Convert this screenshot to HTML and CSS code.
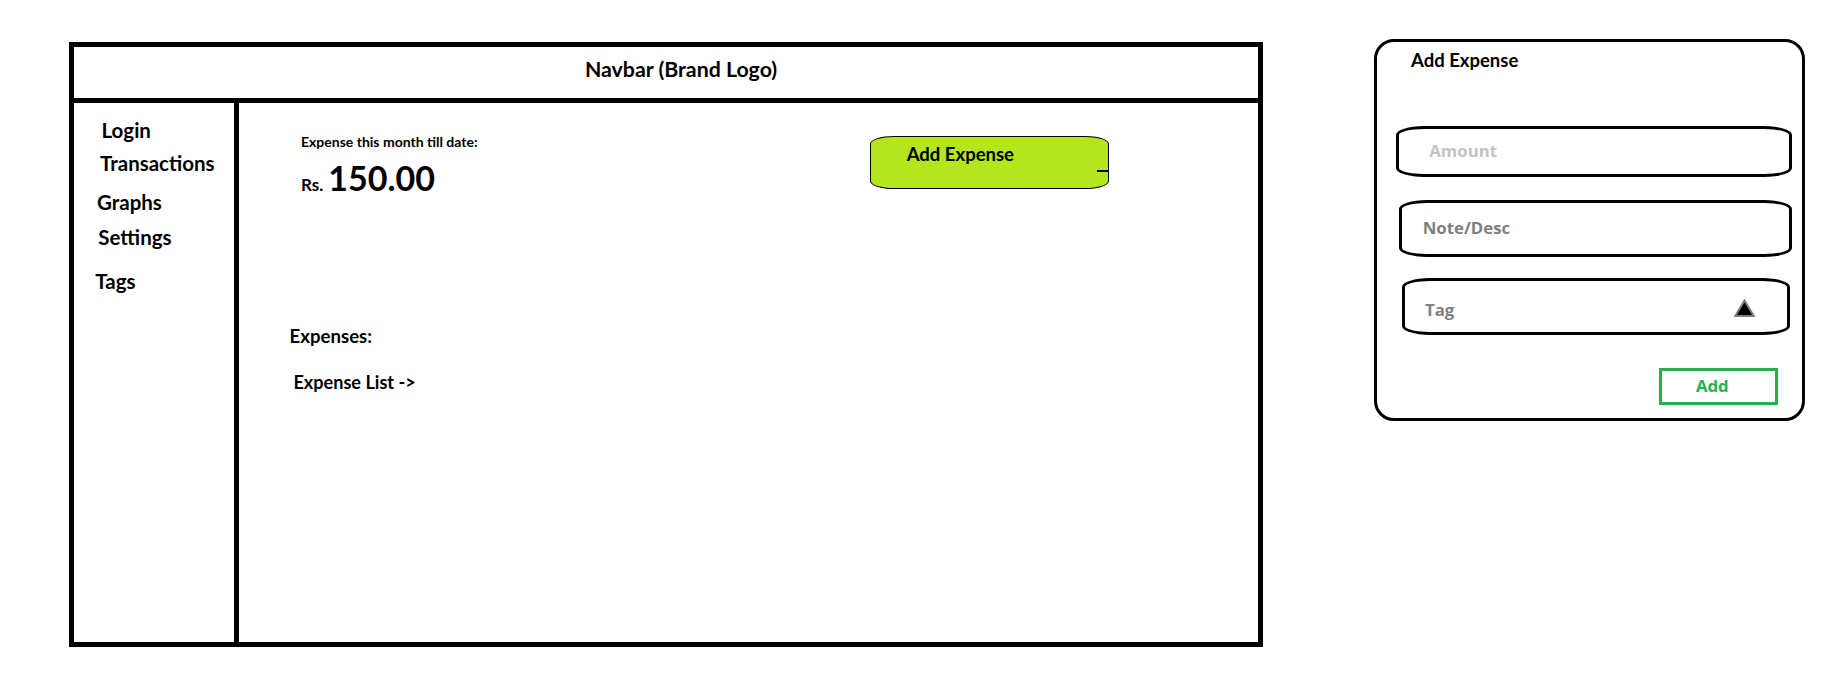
FILE: index.html
```html
<!DOCTYPE html>
<html lang="en">
<head>
<meta charset="utf-8">
<title>Expense Tracker Wireframe</title>
<link rel="stylesheet" href="styles.css">
</head>
<body>
<div class="page">
  <div class="frame">
    <header class="navbar"><span class="navbar-title">Navbar (Brand Logo)</span></header>
    <div class="layout">
      <nav class="sidebar">
        <a class="side-link side-login">Login</a>
        <a class="side-link side-transactions">Transactions</a>
        <a class="side-link side-graphs">Graphs</a>
        <a class="side-link side-settings">Settings</a>
        <a class="side-link side-tags">Tags</a>
      </nav>
      <main class="content">
        <div class="top-row">
          <div class="summary">
            <div class="summary-label">Expense this month till date:</div>
            <div class="summary-amount"><span class="currency">Rs.</span><span class="amount">150.00</span></div>
          </div>
          <div class="add-expense-btn">Add Expense</div>
        </div>
        <h2 class="expenses-heading">Expenses:</h2>
        <div class="expense-list">Expense List -&gt;</div>
      </main>
    </div>
  </div>
  <section class="card">
    <h2 class="card-title">Add Expense</h2>
    <div class="field field-amount"><span class="placeholder placeholder-light">Amount</span></div>
    <div class="field field-note"><span class="placeholder">Note/Desc</span></div>
    <div class="field field-tag">
      <span class="placeholder">Tag</span>
      <svg class="tag-caret" width="21" height="18" viewBox="0 0 21 18"><polygon points="10.5,1.5 1.2,17 19.8,17" fill="#000" stroke="#7f7f7f" stroke-width="2"/></svg>
    </div>
    <div class="card-actions"><div class="add-btn">Add</div></div>
  </section>
</div>
</body>
</html>
```

FILE: styles.css
```css
body {
  margin: 0;
  background: #fff;
  color: #000;
  font-family: Lato, "Liberation Sans", sans-serif;
}

.page {
  display: flex;
  align-items: flex-start;
  padding: 39px 0 0 69px;
}

.frame {
  box-sizing: border-box;
  width: 1194px;
  height: 605px;
  margin-top: 3px;
  border: 5px solid #000;
  display: flex;
  flex-direction: column;
}

.navbar {
  box-sizing: border-box;
  height: 56px;
  border-bottom: 5px solid #000;
  display: flex;
  justify-content: center;
  align-items: flex-start;
  padding: 11.6px 0 0 30px;
  font-size: 21.3px;
  line-height: 21px;
  font-weight: 700;
}

.layout {
  flex: 1;
  display: flex;
}

.sidebar {
  box-sizing: border-box;
  width: 165px;
  border-right: 5px solid #000;
  padding-top: 17.1px;
}

.side-link {
  display: block;
  font-size: 20.5px;
  line-height: 20px;
  font-weight: 700;
  color: #000;
}

.side-login { padding-left: 27.5px; }
.side-transactions { padding-left: 26px; margin-top: 12.7px; }
.side-graphs { padding-left: 23px; margin-top: 19px; }
.side-settings { padding-left: 24.3px; margin-top: 15px; }
.side-tags { padding-left: 21.2px; margin-top: 24px; }

.content {
  flex: 1;
}

.top-row {
  display: flex;
  align-items: flex-start;
  padding-left: 62px;
}

.summary {
  width: 569px;
  padding-top: 31.7px;
  font-weight: 700;
}

.summary-label {
  font-size: 14px;
  line-height: 14px;
}

.summary-amount {
  margin-top: 12.56px;
  font-size: 34px;
  line-height: 34px;
}

.currency {
  font-size: 17px;
  margin-right: 5px;
}

.add-expense-btn {
  position: relative;
  box-sizing: border-box;
  width: 239px;
  height: 53px;
  margin-top: 33px;
  border: 1.5px solid #000;
  border-radius: 24px / 8px;
  background: #b5e61d;
  padding: 7px 0 0 35.7px;
  font-size: 18.5px;
  line-height: 20px;
  font-weight: 700;
}

.add-expense-btn::after {
  content: "";
  position: absolute;
  right: 0;
  top: 33px;
  width: 11px;
  height: 1.5px;
  background: #000;
}

.expenses-heading {
  margin: 123.9px 0 0 50.6px;
  font-size: 18.6px;
  line-height: 20px;
  font-weight: 700;
}

.expense-list {
  margin: 25.8px 0 0 54.4px;
  font-size: 18.1px;
  line-height: 20px;
  font-weight: 700;
}

.card {
  box-sizing: border-box;
  width: 431px;
  height: 382px;
  margin-left: 111px;
  border: 3px solid #000;
  border-radius: 20px;
  padding-top: 8.3px;
}

.card-title {
  margin: 0 0 0 34px;
  font-size: 18.5px;
  line-height: 20px;
  font-weight: 700;
}

.field {
  box-sizing: border-box;
  border: 3px solid #000;
  border-radius: 28px / 9px;
  font-family: "Open Sans", "Liberation Sans", sans-serif;
  font-size: 16.8px;
  line-height: 20px;
  font-weight: 700;
}

.placeholder { color: #7f7f7f; }
.placeholder-light { color: #c3c3c3; }

.field-amount {
  width: 396px;
  height: 51px;
  margin: 55.7px 0 0 19px;
  padding: 11.8px 0 0 30.3px;
}

.field-note {
  width: 393px;
  height: 57px;
  margin: 23px 0 0 22px;
  padding: 15.5px 0 0 20.7px;
}

.field-tag {
  width: 388px;
  height: 57px;
  margin: 21px 0 0 25px;
  padding: 19.2px 32px 0 20px;
  display: flex;
  justify-content: space-between;
  align-items: flex-start;
}

.tag-caret {
  display: block;
  margin-top: -1.3px;
}

.card-actions {
  margin-top: 32.7px;
  padding-left: 282.3px;
}

.add-btn {
  box-sizing: border-box;
  width: 118.4px;
  height: 37.3px;
  border: 3px solid #22b14c;
  color: #22b14c;
  font-family: "Open Sans", "Liberation Sans", sans-serif;
  font-size: 16.7px;
  line-height: 20px;
  font-weight: 700;
  padding: 5.3px 0 0 33.6px;
}
```
